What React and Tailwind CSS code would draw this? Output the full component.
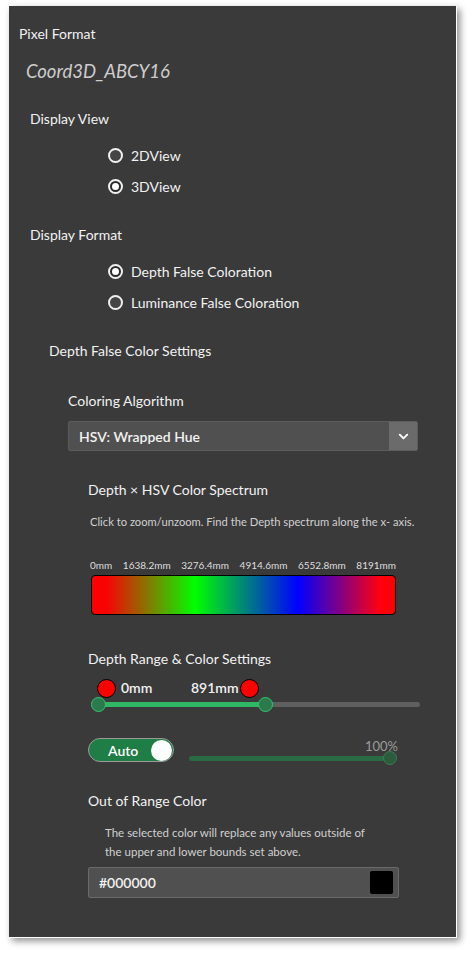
import { ChevronDown } from "lucide-react";

const Radio = ({ checked, label }) => (
  <div className="flex items-center h-5 pl-[89px]">
    <span
      className={
        "w-[15px] h-[15px] rounded-full border-2 border-[#f0f0f0] flex items-center justify-center " +
        (checked ? "bg-[#2a2a2a]" : "bg-[#454545]")
      }
    >
      {checked && <span className="w-[7px] h-[7px] rounded-full bg-white" />}
    </span>
    <span className="ml-[8px] text-[14px] text-[#f2f2f2]">{label}</span>
  </div>
);

const App = () => {
  const ticks = ["0mm", "1638.2mm", "3276.4mm", "4914.6mm", "6552.8mm", "8191mm"];

  return (
    <div className="w-[475px] h-[960px] bg-white pt-[6px] pl-[9px] font-['Lato','Liberation_Sans',sans-serif]">
      <div className="w-[448px] h-[932px] bg-[#3a3a3a] border-r border-b border-white shadow-[3px_3px_7px_rgba(0,0,0,0.45)] pt-[18px] pl-[10px]">
        {/* Pixel format */}
        <div className="text-[14px] leading-5 text-[#f2f2f2]">Pixel Format</div>
        <div className="mt-[15px] ml-[7px] text-[18.5px] leading-6 italic text-[#cdcdcd]">
          Coord3D_ABCY16
        </div>

        {/* Display view */}
        <div className="mt-[26px] ml-[11px] text-[14px] leading-5 text-[#f2f2f2]">Display View</div>
        <div className="mt-[16px] flex flex-col gap-[11px]">
          <Radio label="2DView" />
          <Radio label="3DView" checked />
        </div>

        {/* Display format */}
        <div className="mt-[29px] ml-[11px] text-[14px] leading-5 text-[#f2f2f2]">Display Format</div>
        <div className="mt-[16px] flex flex-col gap-[11px]">
          <Radio label="Depth False Coloration" checked />
          <Radio label="Luminance False Coloration" />
        </div>

        {/* Depth false color settings */}
        <div className="mt-[29px] ml-[30px] text-[14px] leading-5 text-[#f2f2f2]">
          Depth False Color Settings
        </div>

        <div className="ml-[49px]">
          <div className="mt-[30px] text-[14px] leading-5 text-[#f2f2f2]">Coloring Algorithm</div>
          <div className="mt-[10px] w-[350px] h-[30px] flex bg-[#505050] rounded-[2px] border border-[#5c5c5c] overflow-hidden">
            <div className="flex-1 flex items-center pl-[10px] text-[14px] font-semibold text-[#f2f2f2]">
              HSV: Wrapped Hue
            </div>
            <div className="w-[28px] bg-[#6b6b6b] flex items-center justify-center">
              <ChevronDown size={15} strokeWidth={3} color="#ffffff" />
            </div>
          </div>

          <div className="ml-[20px]">
            <div className="mt-[29px] text-[14px] leading-5 text-[#f2f2f2]">Depth × HSV Color Spectrum</div>
            <div className="mt-[14px] ml-[2px] text-[11.2px] leading-4 text-[#d0d0d0]">
              Click to zoom/unzoom. Find the Depth spectrum along the x- axis.
            </div>
            <div className="mt-[28px] ml-[2px] w-[306px] flex justify-between text-[10px] leading-[14px] text-[#dedede]">
              {ticks.map((t) => (
                <span key={t}>{t}</span>
              ))}
            </div>
            <div className="mt-[3px] ml-[3px] w-[305px] h-[40px] rounded-[4px] border-[1.5px] border-black bg-[linear-gradient(to_right,#ff0000_0%,#f70404_5%,#00ff00_34%,#0000ff_68%,#ff0010_95%,#ff0000_100%)]" />

            {/* Depth range */}
            <div className="mt-[34px] text-[14px] leading-5 text-[#f2f2f2]">Depth Range &amp; Color Settings</div>
            <div className="relative mt-[10px] w-[332px] h-[36px]">
              <div className="absolute left-[10px] right-0 top-[23px] h-[5px] rounded-full bg-[#5f5f5f]" />
              <div className="absolute left-[10px] w-[167px] top-[23px] h-[5px] rounded-full bg-[#2fb765]" />
              <div className="absolute left-[9px] top-0 w-[19px] h-[19px] rounded-full border-[1.5px] border-black bg-[#ff0000]" />
              <span className="absolute left-[33px] top-[-2px] text-[14px] font-semibold text-[#f2f2f2]">0mm</span>
              <span className="absolute left-[103px] top-[-2px] text-[14px] font-semibold text-[#f2f2f2]">891mm</span>
              <div className="absolute left-[152px] top-0 w-[19px] h-[19px] rounded-full border-[1.5px] border-black bg-[#ff0000]" />
              <div className="absolute left-[3px] top-[18px] w-[15px] h-[15px] rounded-full border-[1.5px] border-[#36c470] bg-[#2b7a4b]" />
              <div className="absolute left-[170px] top-[18px] w-[15px] h-[15px] rounded-full border-[1.5px] border-[#36c470] bg-[#2b7a4b]" />
            </div>

            {/* Auto + opacity */}
            <div className="mt-[23px] flex items-start">
              <div className="w-[86px] h-[24px] rounded-full bg-[#1f7d46] border border-[#9a9a9a] flex items-center justify-between pl-[19px] pr-[1px]">
                <span className="text-[14px] font-semibold text-white">Auto</span>
                <span className="w-[21px] h-[21px] rounded-full bg-white" />
              </div>
              <div className="ml-[15px] w-[210px] flex flex-col items-end">
                <span className="text-[13px] leading-4 text-[#9a9a9a] mr-[1px]">100%</span>
                <div className="relative -mt-[3px] w-full h-[14px] flex items-center">
                  <div className="w-[201px] h-[5px] rounded-full bg-[#2a6b43]" />
                  <div className="absolute right-[2px] top-0 w-[14px] h-[14px] rounded-full bg-[#2b5c3e] border border-[#3c7a52]" />
                </div>
              </div>
            </div>

            {/* Out of range */}
            <div className="mt-[26px] text-[14px] leading-5 text-[#f2f2f2]">Out of Range Color</div>
            <div className="mt-[12px] ml-[17px] text-[11.5px] leading-[19px] text-[#d0d0d0]">
              The selected color will replace any values outside of
              <br />
              the upper and lower bounds set above.
            </div>
            <div className="mt-[6px] w-[311px] h-[31px] bg-[#505050] border border-[#6a6a6a] rounded-[2px] flex items-center justify-between pl-[10px] pr-[5px]">
              <span className="text-[14px] font-semibold text-[#f2f2f2]">#000000</span>
              <span className="w-[23px] h-[23px] rounded-[2px] bg-black" />
            </div>
          </div>
        </div>
      </div>
    </div>
  );
};

export default App;
